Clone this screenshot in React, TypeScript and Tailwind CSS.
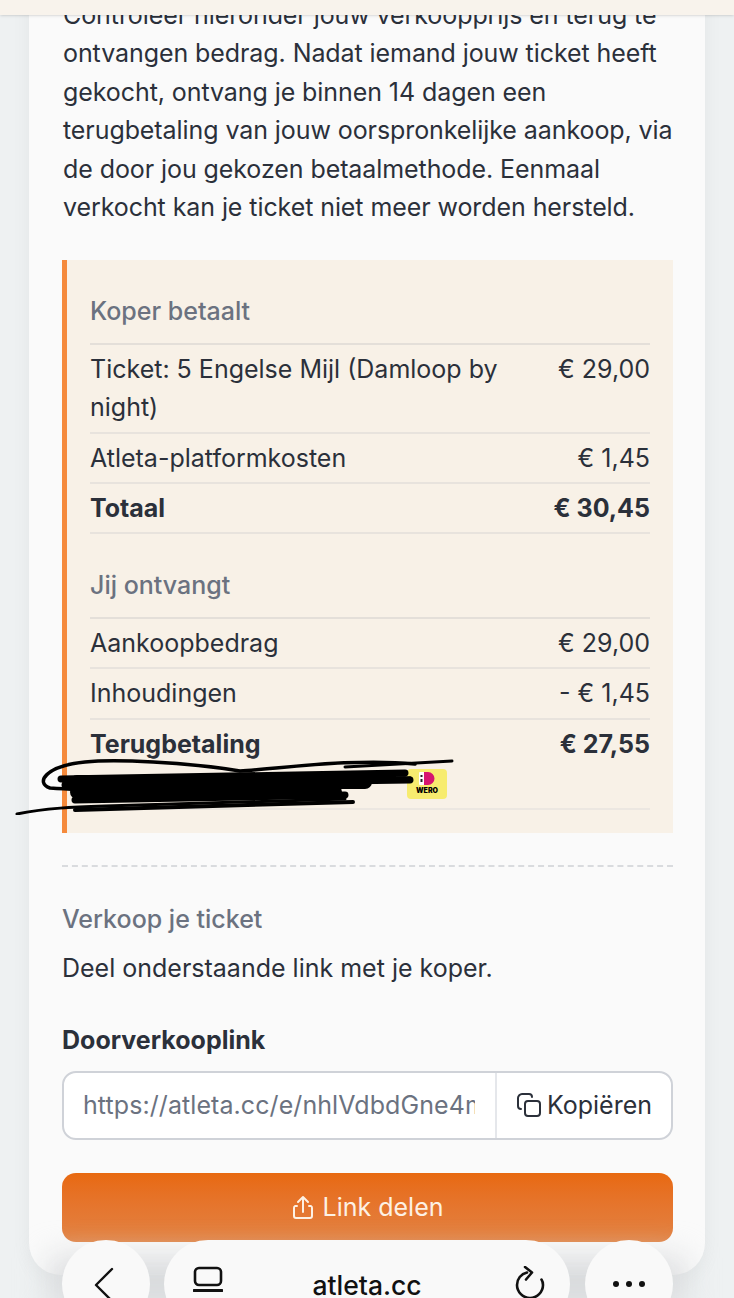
import React from "react";

const Row = ({ label, value, bold }: { label: string; value: string; bold?: boolean }) => (
  <div className={`flex justify-between gap-8 border-b-2 border-[#e8e3dd] py-[5px] ${bold ? "font-bold" : ""}`}>
    <span>{label}</span>
    <span className="shrink-0">{value}</span>
  </div>
);

const Heading = ({ children, className }: { children: React.ReactNode; className: string }) => (
  <div className={`border-b-2 border-[#e4dfd9] font-medium text-[#6b7280] ${className}`}>{children}</div>
);

const App = () => {
  return (
    <div
      className="relative h-[1298px] w-[734px] overflow-hidden bg-[#eef1f2] text-[25px] leading-[38.4px] text-[#2b303a]"
      style={{ fontFamily: "Inter, 'Noto Sans', sans-serif" }}
    >
      <div className="absolute inset-x-0 top-0 z-10 h-[15px] bg-[#f8f3ec] shadow-sm" />

      <div className="mx-[29px] -mt-[4px] h-[1279px] rounded-b-[32px] bg-[#fafafa] pl-[33px] pr-[32px] shadow-[0_4px_20px_rgba(0,0,0,0.05)]">
        <p className="-mr-[4px] pl-[1px] tracking-[-0.08px]">
          Controleer hieronder jouw verkoopprijs en terug te ontvangen bedrag. Nadat iemand jouw ticket heeft gekocht,
          ontvang je binnen 14 dagen een terugbetaling van jouw oorspronkelijke aankoop, via de door jou gekozen
          betaalmethode. Eenmaal verkocht kan je ticket niet meer worden hersteld.
        </p>

        <div className="relative mt-[34px] h-[573px] border-l-[5px] border-[#f58a3c] bg-[#f8f1e7] pl-[23px] pr-[23px] pt-[32px]">
          <Heading className="pb-[12px]">Koper betaalt</Heading>
          <Row label="Ticket: 5 Engelse Mijl (Damloop by night)" value="€ 29,00" />
          <Row label="Atleta-platformkosten" value="€ 1,45" />
          <Row label="Totaal" value="€ 30,45" bold />
          <Heading className="pb-[12px] pt-[32px]">Jij ontvangt</Heading>
          <Row label="Aankoopbedrag" value="€ 29,00" />
          <Row label="Inhoudingen" value="- € 1,45" />
          <div className="flex justify-between py-[5px] font-bold">
            <span>Terugbetaling</span>
            <span>€ 27,55</span>
          </div>
          <div className="h-[42px] border-b-2 border-[#ece7e1]" />

          <div className="absolute left-[340px] top-[509px] flex h-[30px] w-[40px] flex-col items-center rounded-[4px] bg-[#f7ec6f] pt-[2px]">
            <svg width="16" height="15" viewBox="0 0 16 15">
              <rect x="0" y="1" width="6" height="13" rx="1" fill="#fff" />
              <path d="M1.5 4h2v2h-2zM1.5 8h2v3h-2z" fill="#222" />
              <path d="M5 1h4a6.5 6.5 0 0 1 0 13H5z" fill="#d6156f" />
            </svg>
            <span className="text-[7px] font-black leading-[9px] text-black">WERO</span>
          </div>

          {/* scribble over the iban */}
          <svg className="absolute -left-[52px] top-[495px]" width="445" height="60" viewBox="0 0 445 60" fill="none" stroke="#000" strokeLinecap="round">
            <path d="M2 59 C 30 53, 60 52, 90 51 L 330 44" strokeWidth="3" />
            <path d="M60 55 L 338 47" strokeWidth="4" />
            <path d="M400 9 C 340 3, 270 13, 225 16 C 170 7, 100 4, 70 7 C 30 11, 20 28, 35 33 C 100 38, 250 32, 395 23" strokeWidth="3.5" />
            <path d="M46 24 L 390 18 M50 30 L 395 25 M60 45 L 330 40" strokeWidth="7" />
            <path d="M62 27 H 350 M62 37 H 320" strokeWidth="14" />
            <path d="M330 12 L 437 6" strokeWidth="3" />
          </svg>
        </div>

        <div className="mt-[32px] border-t-2 border-dashed border-[#d9dbde]" />

        <div className="mt-[33px] font-medium text-[#6b7280]">Verkoop je ticket</div>
        <div className="mt-[10px]">Deel onderstaande link met je koper.</div>
        <div className="mt-[34px] font-bold">Doorverkooplink</div>

        <div className="mt-[11px] flex h-[69px] overflow-hidden rounded-[14px] border-2 border-[#cfd2d8] bg-white">
          <div className="min-w-0 flex-1 whitespace-nowrap pl-[19px] pr-[20px] leading-[65px] text-[#6b7280]">
            <div className="overflow-hidden tracking-[0.08px]">https://atleta.cc/e/nhlVdbdGne4m</div>
          </div>
          <div className="flex w-[176px] shrink-0 items-center justify-center gap-[5px] border-l-2 border-[#e5e7eb]">
            <svg width="26" height="26" viewBox="0 0 26 26" fill="none" stroke="#2b303a" strokeWidth="2" strokeLinecap="round">
              <rect x="9" y="9" width="15" height="15" rx="3" />
              <path d="M5 17 C 3 17, 2 16, 2 14 V 6 C 2 4, 4 2, 6 2 H 13 C 15 2, 16 3, 16 5" />
            </svg>
            <span>Kopiëren</span>
          </div>
        </div>

        <div className="mt-[33px] flex h-[69px] items-center justify-center gap-[9px] rounded-[14px] bg-gradient-to-b from-[#e8690f] to-[#e28242] text-[#fdf1e4]">
          <svg width="22" height="25" viewBox="0 0 22 25" fill="none" stroke="currentColor" strokeWidth="2" strokeLinecap="round" strokeLinejoin="round">
            <path d="M11 17V2M6 7l5-5 5 5" />
            <path d="M5 11H3a2 2 0 0 0-1 2v8a2 2 0 0 0 2 2h14a2 2 0 0 0 2-2v-8a2 2 0 0 0-1-2h-2" />
          </svg>
          <span>Link delen</span>
        </div>
      </div>

      <div className="absolute -bottom-[10px] left-[50px] right-[50px] h-[50px] bg-[#d8dadc] blur-lg" />

      <div className="absolute left-[62px] top-[1240px] flex h-[88px] w-[88px] items-center justify-center rounded-full bg-[#f9f9f9]">
        <svg width="24" height="36" viewBox="0 0 24 36" fill="none" stroke="#111" strokeWidth="2.4" strokeLinecap="round" strokeLinejoin="round" className="-translate-x-[1px] translate-y-[1px]">
          <path d="M19 2 3 18l16 16" />
        </svg>
      </div>
      <div className="absolute left-[164px] top-[1240px] flex h-[88px] w-[406px] items-start justify-between rounded-full bg-[#f9f9f9] pl-[29px] pr-[25px] pt-[26px]">
        <svg width="30" height="34" viewBox="0 0 30 34" fill="none" stroke="#111" strokeWidth="2.6" strokeLinecap="round">
          <rect x="2" y="2" width="26" height="17" rx="4" />
          <path d="M1 24.5h28" strokeWidth="3" />
        </svg>
        <span className="mt-[6px] -translate-x-[2px] text-[26.5px] font-medium leading-[26px] text-[#111]">atleta.cc</span>
        <svg width="30" height="36" viewBox="0 0 30 36" fill="none" stroke="#111" strokeWidth="2.6" strokeLinecap="round" strokeLinejoin="round">
          <path d="M12 6.500C6 8 2 13 2 19c0 7 6 13 13 13s13-6 13-13c0-2-.5-4-1.500-5.500" />
          <path d="M10 1l7 5.500-6 7" />
        </svg>
      </div>
      <div className="absolute left-[585px] top-[1240px] flex h-[88px] w-[88px] items-center justify-center rounded-full bg-[#f9f9f9]">
        <div className="flex gap-[7px]">
          <div className="h-[6px] w-[6px] rounded-full bg-[#111]" />
          <div className="h-[6px] w-[6px] rounded-full bg-[#111]" />
          <div className="h-[6px] w-[6px] rounded-full bg-[#111]" />
        </div>
      </div>
    </div>
  );
};

export default App;
